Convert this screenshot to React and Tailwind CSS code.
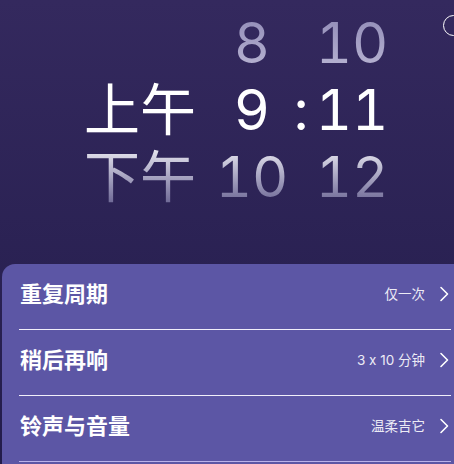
import React from "react";

const font = { fontFamily: 'Inter, "Noto Sans CJK SC", sans-serif', fontFeatureSettings: '"calt" 0' };

const fadeTop = "bg-gradient-to-b from-[#8f89b5] to-[#bdb9d6] bg-clip-text text-transparent";
const fadeBottom = "bg-gradient-to-b from-[#f4f3f8] to-[#5f5889] bg-clip-text text-transparent";

const Cell = ({ w, children, className = "" }) => (
  <div className={`${w} text-center whitespace-nowrap ${className}`}>{children}</div>
);

const rows = [
  { title: "重复周期", value: "仅一次" },
  { title: "稍后再响", value: "3 x 10 分钟" },
  { title: "铃声与音量", value: "温柔吉它", last: true },
];

const Chevron = () => (
  <svg width="10" height="16" viewBox="0 0 10 16" fill="none" className="ml-[14px]">
    <path d="M2 1.5 L8.5 8 L2 14.5" stroke="white" strokeWidth="1.6" strokeLinecap="round" strokeLinejoin="round" />
  </svg>
);

export default function App() {
  return (
    <div className="w-[454px] h-[464px] overflow-hidden relative bg-gradient-to-b from-[#34295e] to-[#231c4b] flex flex-col" style={font}>
      {/* timer ring, cut off */}
      <div className="absolute left-[443px] top-[15px] w-[21px] h-[21px] rounded-full border-[1.5px] border-white" />

      {/* time picker */}
      <div className="h-[264px] pt-[10px] text-[56px] leading-[67px] text-white tabular-nums">
        <div className="flex pl-[80px]">
          <Cell w="w-[120px]"></Cell>
          <Cell w="w-[80px] ml-[12px]" className={fadeTop}>8</Cell>
          <Cell w="w-[18px]"></Cell>
          <Cell w="w-[84px]" className={fadeTop}>10</Cell>
        </div>
        <div className="flex pl-[80px]">
          <Cell w="w-[120px]">上午</Cell>
          <Cell w="w-[80px] ml-[12px]">9</Cell>
          <Cell w="w-[18px]">:</Cell>
          <Cell w="w-[84px]">11</Cell>
        </div>
        <div className="flex pl-[80px]">
          <Cell w="w-[120px]" className={fadeBottom}>下午</Cell>
          <Cell w="w-[80px] ml-[12px]" className={fadeBottom}>10</Cell>
          <Cell w="w-[18px]"></Cell>
          <Cell w="w-[84px]" className={fadeBottom}>12</Cell>
        </div>
      </div>

      {/* settings list */}
      <div className="ml-[2px] flex-1 bg-[#5c56a5] rounded-tl-[13px] pl-[17px] pr-[3px]">
        {rows.map((r) => (
          <div
            key={r.title}
            className={`h-[66px] pb-[5px] flex items-center border-b ${r.last ? "border-[#b9b2ea]" : "border-[#f1effa]"}`}
          >
            <span className="text-[22px] font-bold text-white flex-1 pl-[1px]">{r.title}</span>
            <span className="text-[13.5px] text-[#ecebf5]">{r.value}</span>
            <Chevron />
            <div className="w-[2px]" />
          </div>
        ))}
      </div>
    </div>
  );
}
